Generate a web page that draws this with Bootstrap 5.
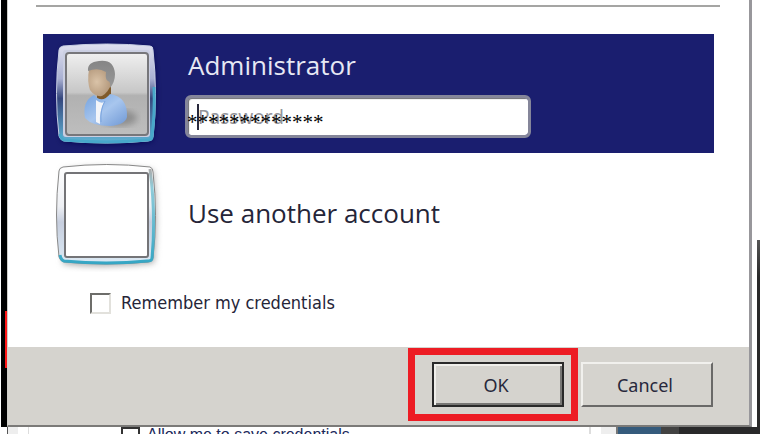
<!DOCTYPE html>
<html lang="en">
<head>
<meta charset="utf-8">
<meta name="viewport" content="width=device-width, initial-scale=1">
<title>Windows Security</title>
<link href="https://cdn.jsdelivr.net/npm/bootstrap@5.3.0/dist/css/bootstrap.min.css" rel="stylesheet">
<style>
body{font-family:"Noto Sans","Open Sans",sans-serif;background:#fff;color:#252538;overflow:hidden}
.desktop-edge{width:6px;margin-left:1px;background:#000;position:relative}
.alert-edge{position:absolute;right:0;top:311px;width:2px;height:57px;background:#ff1717}
.dialog-pane{min-width:0;border-left:1px solid #cfcec9;border-right:3px solid #98979b;border-bottom:2px solid #7b7a78}
.right-edge{width:8px;padding-left:5px}
.right-edge::after{content:"";display:block;width:3px;height:187px;margin-top:240px;background:linear-gradient(#555,#292929 20%)}
.dialog-body{padding:5px 35px 32px 28px}
.rule-line{height:2px;background:#a5a5a3;margin-right:-6px}
.account-list{padding-left:7px;margin-top:27px}
.account-row{height:119px;padding-left:8px;column-gap:25px}
.account-row.chosen{background:#1a1e6f}
.account-tile{width:112px;height:112px;flex:none}
.account-name{font-family:"Open Sans","Noto Sans",sans-serif;font-size:26px;line-height:32px}
.chosen .account-name{color:#e6e8f4;margin-bottom:14px}
.other-row{height:126px}
.other-row .account-name{padding-bottom:7px}
.password-box{width:346px;max-width:100%;margin-left:-3px;position:relative}
.password-box input{font-size:19px;line-height:24px;padding:5px 10px;height:43px;border:3px solid #85869a;border-radius:6px;box-shadow:inset 1px 1px 1px #6c6c72;color:#222}
.password-box input::placeholder{color:#94949a;opacity:1}
.typed-mask{position:absolute;left:2px;top:15px;font:21px/24px "Liberation Serif",serif;color:#000;pointer-events:none}
.typing-caret{position:absolute;left:12px;top:9px;width:2px;height:26px;background:#28283b}
.remember{font-family:"DejaVu Sans Condensed","Noto Sans",sans-serif;font-size:18px;line-height:24px;padding-left:54px;gap:10px;margin-top:12px}
.remember input{appearance:none;width:21px;height:21px;margin:0;background:#fff;border:2px solid;border-color:#6d6d6a #e2e1dc #e2e1dc #6d6d6a}
.remember input:checked{background:#25253a;box-shadow:inset 0 0 0 3px #fff}
.dialog-actions{background:#d5d3ce;padding:1px 36px 4px 0;gap:3px}
.highlight{border:7px solid #ed1c24;padding:7px 7px 7px 17px}
.btn-classic{font-size:18px;line-height:24px;width:132px;height:45px;padding:0 4px 0 0;border-radius:0;background:#d5d3ce;color:#28283c;border:2px solid;border-color:#f1f0ed #6a6968 #6a6968 #f1f0ed}
.btn-classic:hover{background:#dddbd6;color:#28283c;border-color:#f1f0ed #6a6968 #6a6968 #f1f0ed}
.btn-classic.default,.btn-classic.default:hover{border-color:#292929;box-shadow:inset 2px 2px #efeeea,inset -2px -2px #777674}
.behind{height:7px;overflow:hidden;margin-left:7px}
.behind-rail{width:22px;border-right:1px solid #ddd;border-left:1px solid #555;background:linear-gradient(90deg,#eee 50%,#fff 50%)}
.behind-label{font-family:"Liberation Sans",sans-serif;font-size:16px;line-height:16px;color:#20285a;gap:7px;padding-left:92px}
.behind-label input{appearance:none;width:19px;height:19px;border:2px solid #333;margin:0}
.behind-end{width:29px;border-left:2px solid #ddd;border-right:2px solid #777;background:linear-gradient(90deg,#fff 42%,#eee 42%)}
.behind-blue{width:43px;background:#355b7c}
.behind-mid{width:18px;background:#424242}
.behind-dark{width:81px;background:#29292a}
</style>
<script src="https://cdn.jsdelivr.net/npm/bootstrap@5.3.0/dist/js/bootstrap.bundle.min.js"></script>
</head>
<body>
<div class="d-flex">
  <div class="desktop-edge flex-shrink-0"><span class="alert-edge"></span></div>
  <main class="dialog-pane flex-grow-1">
    <form onsubmit="return false">
      <div class="dialog-body">
        <div class="rule-line"></div>
        <div class="account-list">
          <section class="account-row chosen d-flex align-items-center">
            <svg class="account-tile" viewBox="0 0 112 112" aria-hidden="true">
              <defs>
                <linearGradient id="frame" x2="0" y2="1"><stop stop-color="#e0e1f0"/><stop offset=".35" stop-color="#a9b0d2"/><stop offset=".55" stop-color="#35477e"/><stop offset="1" stop-color="#60b4d5"/></linearGradient>
                <linearGradient id="glass" x2="0" y2="1"><stop stop-color="#f0f0f0"/><stop offset=".48" stop-color="#c7c7c7"/><stop offset=".52" stop-color="#b1b1b1"/><stop offset="1" stop-color="#bebebe"/></linearGradient>
                <radialGradient id="face" cx=".35" cy=".5" r=".7"><stop stop-color="#dac3a8"/><stop offset="1" stop-color="#ab8f72"/></radialGradient>
                <linearGradient id="hair" x2="0" y2="1"><stop stop-color="#858585"/><stop offset="1" stop-color="#989898"/></linearGradient>
                <linearGradient id="shirt" x2="1" y2="1"><stop stop-color="#74a2de"/><stop offset=".5" stop-color="#a8c6ee"/><stop offset="1" stop-color="#6f98d5"/></linearGradient>
                <filter id="soft"><feGaussianBlur stdDeviation="3"/></filter>
              </defs>
              <path d="M11 10Q56 4 101 10Q108 56 101 103Q56 109 11 103Q4 56 11 10Z" fill="#0a1049" filter="url(#soft)"/>
              <path d="M12 8Q56 4 99 8Q102 8 102 12Q107 56 102 99Q101 103 97 103Q56 107 13 103Q9 102 8 98Q3 56 8 12Q8 9 12 8Z" fill="url(#frame)" stroke="#c7cee4"/>
              <path d="M103 49Q104 76 101 99Q101 102 96 102Q56 106 13 102Q10 101 9 96" fill="none" stroke="#48a8ca" stroke-width="3"/>
              <rect x="12" y="12" width="87" height="87" rx="3" fill="#cbcfe2"/>
              <rect x="15" y="15" width="82" height="82" rx="3" fill="url(#glass)" stroke="#77777b" stroke-width="2"/>
              <ellipse cx="68" cy="80" rx="18" ry="8" fill="#777" opacity=".65" filter="url(#soft)"/>
              <path d="M46 54L60 47L60 58Q53 69 46 62Z" fill="#805b2c"/>
              <path d="M43 57Q51 66 59 56Q77 59 76 79Q74 87 59 88Q41 88 34 80Q31 63 43 57Z" fill="url(#shirt)"/>
              <path d="M45 62Q50 66 53 64Q48 74 49 86L45 84Z" fill="#f3f5f9"/>
              <path d="M50 84Q49 72 54 63" fill="none" stroke="#7ba5df"/>
              <path d="M38 31Q49 27 59 34L62 43Q57 55 51 58Q44 59 39 52Q36 44 38 31Z" fill="url(#face)"/>
              <path d="M37 33Q36 24 48 23Q63 21 64 36Q64 44 59 50Q60 44 57 43Q54 42 55 34Q47 29 37 33Z" fill="url(#hair)"/>
            </svg>
            <div class="flex-grow-1">
              <label class="account-name d-block" for="password">Administrator</label>
              <div class="password-box">
                <input class="form-control" id="password" type="password" placeholder="Password" autocomplete="off">
                <span class="typed-mask" aria-hidden="true">*************</span>
                <span class="typing-caret"></span>
              </div>
            </div>
          </section>
          <section class="account-row other-row d-flex align-items-center">
            <svg class="account-tile" viewBox="0 0 112 112" aria-hidden="true">
              <defs><linearGradient id="clear" x2="0" y2="1"><stop stop-color="#fff"/><stop offset=".42" stop-color="#eef0f4"/><stop offset=".58" stop-color="#c6cede"/><stop offset="1" stop-color="#dceaf5"/></linearGradient>
              <linearGradient id="cyan" x2="0" y2="1"><stop stop-color="#aaa"/><stop offset=".2" stop-color="#90ccda"/><stop offset="1" stop-color="#36a6c4"/></linearGradient></defs>
              <path d="M12 10Q56 4 102 10Q108 56 103 103Q56 109 12 104Z" fill="#aaa" filter="url(#soft)"/>
              <path d="M12 7Q56 2 99 7Q102 8 102 12Q107 56 102 98Q101 102 97 102Q56 106 13 102Q9 101 8 97Q3 56 8 11Q8 8 12 7Z" fill="url(#clear)" stroke="#888"/>
              <path d="M99 9Q105 56 101 98Q101 101 96 101Q56 105 13 101Q10 100 9 95" fill="none" stroke="url(#cyan)" stroke-width="3"/>
              <rect x="14" y="13" width="83" height="84" rx="2" fill="#fff" stroke="#747477" stroke-width="2"/>
            </svg>
            <a class="account-name text-reset text-decoration-none" href="#">Use another account</a>
          </section>
        </div>
        <div class="remember d-flex align-items-center">
          <input type="checkbox" id="remember"><label for="remember">Remember my credentials</label>
        </div>
      </div>
      <div class="dialog-actions d-flex justify-content-end align-items-center">
        <div class="highlight"><button class="btn btn-classic default" type="submit">OK</button></div>
        <button class="btn btn-classic" type="button">Cancel</button>
      </div>
    </form>
  </main>
  <div class="right-edge flex-shrink-0"></div>
</div>
<div class="behind d-flex">
  <div class="behind-rail"></div>
  <div class="behind-label d-flex flex-grow-1">
    <input type="checkbox" id="save"><label for="save">Allow me to save credentials</label>
  </div>
  <div class="behind-end"></div><div class="behind-blue"></div><div class="behind-mid"></div><div class="behind-dark"></div>
</div>
</body>
</html>
